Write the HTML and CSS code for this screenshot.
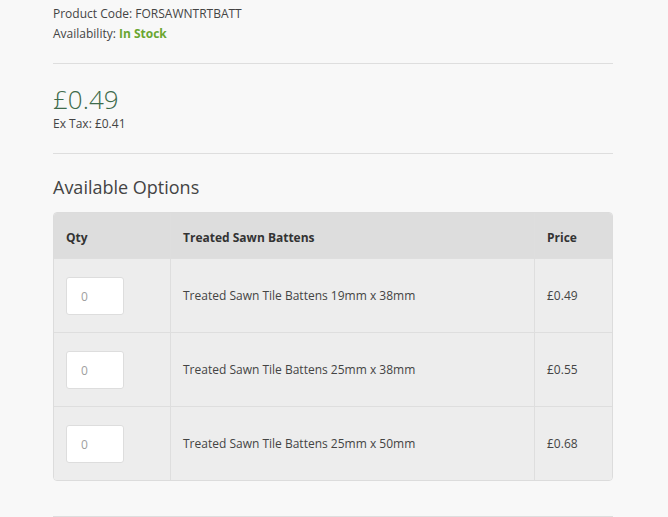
FILE: index.html
```html
<!DOCTYPE html>
<html>
<head>
<meta charset="utf-8">
<link rel="stylesheet" href="styles.css">
</head>
<body>
<div class="product">
  <ul class="meta">
    <li>Product Code: FORSAWNTRTBATT</li>
    <li>Availability: <span class="stock">In Stock</span></li>
  </ul>
  <hr class="rule">
  <div class="pricing">
    <div class="price">£0.49</div>
    <div class="extax">Ex Tax: £0.41</div>
  </div>
  <hr class="rule flush">
  <h3 class="options-title">Available Options</h3>
  <div class="table-wrap">
    <table class="options">
      <thead>
        <tr>
          <th class="c-qty">Qty</th>
          <th class="c-desc">Treated Sawn Battens</th>
          <th class="c-price">Price</th>
        </tr>
      </thead>
      <tbody>
        <tr>
          <td class="c-qty"><input class="qty" type="text" placeholder="0"></td>
          <td class="c-desc">Treated Sawn Tile Battens 19mm x 38mm</td>
          <td class="c-price">£0.49</td>
        </tr>
        <tr>
          <td class="c-qty"><input class="qty" type="text" placeholder="0"></td>
          <td class="c-desc">Treated Sawn Tile Battens 25mm x 38mm</td>
          <td class="c-price">£0.55</td>
        </tr>
        <tr>
          <td class="c-qty"><input class="qty" type="text" placeholder="0"></td>
          <td class="c-desc">Treated Sawn Tile Battens 25mm x 50mm</td>
          <td class="c-price">£0.68</td>
        </tr>
      </tbody>
    </table>
  </div>
  <hr class="rule bottom">
</div>
</body>
</html>
```

FILE: styles.css
```css
html, body {
  margin: 0;
  padding: 0;
  background: #f8f8f8;
}
body {
  font-family: "Open Sans", "Liberation Sans", sans-serif;
  font-size: 12px;
  color: #444;
}
.product {
  width: 560px;
  margin-left: 53px;
  padding-top: 4px;
}
.meta {
  list-style: none;
  margin: 0;
  padding: 0;
  line-height: 20px;
}
.stock {
  color: #6aa630;
  font-weight: 700;
}
.rule {
  border: 0;
  border-top: 1px solid #dedede;
  margin: 19px 0 0 0;
  height: 0;
}
.rule.flush {
  margin-top: 0;
}
.pricing {
  padding-top: 18px;
  padding-bottom: 21px;
}
.price {
  font-size: 26px;
  font-weight: 300;
  line-height: 34px;
  color: #3e6b4b;
}
.extax {
  line-height: 16px;
}
.options-title {
  font-size: 18px;
  font-weight: 400;
  color: #444;
  margin: 20px 0 0 0;
  line-height: 26px;
}
.table-wrap {
  margin-top: 12px;
  border: 1px solid #dcdcdc;
  border-radius: 4px;
  overflow: hidden;
}
.options {
  width: 100%;
  border-collapse: collapse;
}
.options th, .options td {
  padding: 0 12px;
  text-align: left;
  vertical-align: middle;
  border-left: 1px solid #dedede;
}
.options th:first-child, .options td:first-child {
  border-left: 0;
}
.options th {
  background: #dddddd;
  height: 42px;
  padding-top: 3px;
  font-weight: 700;
  color: #333;
}
.options td {
  background: #ededed;
  height: 73px;
  border-top: 1px solid #dedede;
  color: #444;
}
.options .c-qty {
  width: 92px;
}
.options .c-price {
  width: 53px;
}
.qty {
  display: block;
  box-sizing: border-box;
  width: 58px;
  height: 38px;
  margin-top: 1px;
  border: 1px solid #dddddd;
  border-radius: 3px;
  background: #fff;
  padding: 0 0 0 14px;
  font-family: "Open Sans", "Liberation Sans", sans-serif;
  font-size: 12px;
  color: #999;
  outline: none;
}
.qty::placeholder {
  color: #a0a0a0;
}
.rule.bottom {
  margin-top: 35px;
}
```
